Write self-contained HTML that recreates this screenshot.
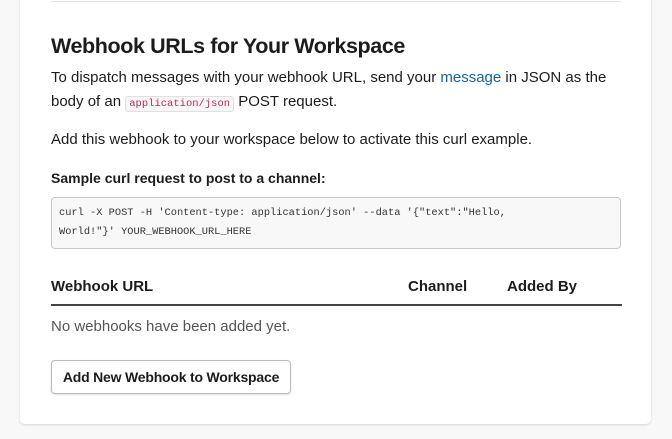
<!DOCTYPE html>
<html><head><style>
body{margin:0;width:672px;height:439px;background:#f8f8f8;font-family:"Liberation Sans",sans-serif;color:#1d1c1d;position:relative;overflow:hidden}
.card{position:absolute;left:20px;top:-10px;width:631px;height:434px;background:#fff;border-radius:5px;box-shadow:0 1px 2px rgba(0,0,0,.15)}
.a{position:absolute}
.hr{left:51px;top:1px;width:570px;height:1px;background:#e5e5e5}
h1{position:absolute;left:51px;top:34px;margin:0;font-size:21.5px;font-weight:bold;letter-spacing:-0.4px}
p{margin:0;font-size:15px;line-height:24px}
code{font-family:"Liberation Mono",monospace;font-size:10.5px;color:#c0245c;background:#f7f7f7;border:1px solid #e0e0e0;border-radius:3px;padding:1px 3px}
.pre{left:51px;top:197px;width:554px;height:38px;padding:6px 7px;border:1px solid #c7c7c7;border-radius:4px;background:#f8f8f8;font-family:"Liberation Mono",monospace;font-size:10.35px;line-height:19px;color:#333}
.th{top:278px;font-size:15px;font-weight:bold}
.line{left:51px;top:304px;width:571px;height:2px;background:#454545}
.btn{left:51px;top:360px;width:238px;height:32px;border:1px solid #bbb;border-radius:4px;box-shadow:0 1px 2px rgba(0,0,0,.12);font-size:14px;font-weight:bold;line-height:32px;text-align:center;background:#fff;letter-spacing:-0.2px}
</style></head><body>
<div class="card"></div>
<div class="a hr"></div>
<h1>Webhook URLs for Your Workspace</h1>
<div class="a" style="left:51px;top:66px;width:570px"><p>To dispatch messages with your webhook URL, send your <span style="color:#1264a3">message</span> in JSON as the body of an <code>application/json</code> POST request.</p></div>
<div class="a" style="left:51px;top:128px"><p>Add this webhook to your workspace below to activate this curl example.</p></div>
<div class="a" style="left:51px;top:170px;font-size:14px;font-weight:bold">Sample curl request to post to a channel:</div>
<div class="a pre">curl -X POST -H 'Content-type: application/json' --data '{"text":"Hello,<br>World!"}' YOUR_WEBHOOK_URL_HERE</div>
<div class="a th" style="left:51px">Webhook URL</div>
<div class="a th" style="left:408px">Channel</div>
<div class="a th" style="left:507px">Added By</div>
<div class="a line"></div>
<div class="a" style="left:51px;top:318px;font-size:15px;color:#555">No webhooks have been added yet.</div>
<div class="a btn">Add New Webhook to Workspace</div>
</body></html>
